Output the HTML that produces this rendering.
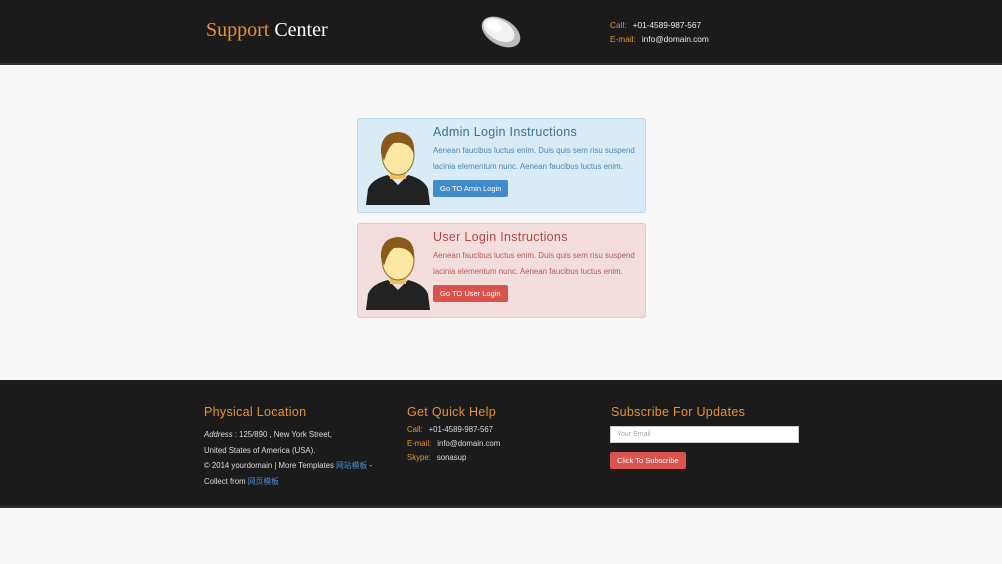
<!DOCTYPE html>
<html><head><meta charset="utf-8"><style>
*{margin:0;padding:0;box-sizing:border-box}
body{width:1002px;height:564px;overflow:hidden;background:#f7f7f7;font-family:"Liberation Sans",sans-serif;position:relative}
.hdr{position:absolute;left:0;top:0;width:1002px;height:65px;background:#1b1b1b;border-bottom:2px solid #333}
.logo{position:absolute;left:206px;top:19px;font-family:"Liberation Serif",serif;font-size:20px;color:#fff}
.logo span{color:#e8912f}
.ct{position:absolute;left:610px;top:18px;font-size:8.3px;color:#eee;line-height:14px}
.ct b{font-weight:normal;color:#e8912f;margin-right:6px}
.card{position:absolute;left:357px;width:289px;height:95px;border-radius:3px}
.c1{top:118px;background:#d8ebf6;border:1px solid #b9dbee}
.c2{top:223px;background:#f3dddd;border:1px solid #ebc4c4}
.card h3{position:absolute;left:75px;top:6px;font-size:12.5px;font-weight:normal;letter-spacing:.3px}
.c1 h3{color:#3c6f95}.c2 h3{color:#b0474a}
.card p{position:absolute;left:75px;top:24px;font-size:7.9px;line-height:16px;width:215px}
.c1 p{color:#4a86ab}.c2 p{color:#b65a5a}
.btn{position:absolute;left:75px;top:61px;height:17px;padding:0 7px;font-size:7.5px;line-height:17px;color:#fff;border-radius:2px}
.c1 .btn{background:#428bca}.c2 .btn{background:#d9534f}
.av{position:absolute;left:8px;top:8px;width:64px;height:78px}
.ftr{position:absolute;left:0;top:380px;width:1002px;height:128px;background:#1b1b1b;border-bottom:2px solid #333}
.ftr h4{position:absolute;top:25px;font-size:12.5px;font-weight:normal;color:#e8912f;letter-spacing:.3px}
.fc{position:absolute;top:47px;font-size:7.8px;color:#ddd;line-height:15.5px}
.fc b{font-weight:normal;color:#e8912f;margin-right:6px}
.fc a{color:#4a8fd0;text-decoration:none}
.inp{position:absolute;left:610px;top:426px;width:189px;height:17px;background:#fff;border:1px solid #ccc;font-size:7px;color:#aaa;padding:4px 6px}
.sub{position:absolute;left:610px;top:452px;height:17px;padding:0 7px;background:#d9534f;color:#fff;font-size:7.5px;line-height:17px;border-radius:2px}
</style></head><body>
<div class="hdr">
<div class="logo"><span>Support</span> Center</div>
<svg style="position:absolute;left:478px;top:14px" width="46" height="36" viewBox="0 0 46 36"><ellipse cx="23" cy="18" rx="21" ry="13" transform="rotate(30 23 18)" fill="#bbb"/><ellipse cx="21" cy="16" rx="17" ry="10" transform="rotate(30 21 16)" fill="#f2f2f2"/><ellipse cx="16" cy="12" rx="8" ry="5" transform="rotate(30 16 12)" fill="#fff"/></svg>
<div class="ct"><b>Call:</b>+01-4589-987-567<br><b>E-mail:</b>info@domain.com</div>
</div>

<div class="card c1">
<svg class="av" viewBox="0 0 64 78"><path d="M0 78 L2 62 Q6 52 22 48 L32 58 L42 48 Q58 52 62 62 L64 78Z" fill="#222"/><rect x="24" y="38" width="16" height="14" fill="#f0c060"/><ellipse cx="32" cy="28" rx="16" ry="20" fill="#fde7a3" stroke="#8a6a20"/><path d="M15 26 Q14 6 32 5 Q50 6 48 28 Q44 14 28 16 Q22 20 18 34Z" fill="#8a5a1c"/></svg>
<h3>Admin Login Instructions</h3>
<p>Aenean faucibus luctus enim. Duis quis sem risu suspend lacinia elementum nunc. Aenean faucibus luctus enim.</p>
<div class="btn">Go TO Amin Login</div>
</div>
<div class="card c2">
<svg class="av" viewBox="0 0 64 78"><path d="M0 78 L2 62 Q6 52 22 48 L32 58 L42 48 Q58 52 62 62 L64 78Z" fill="#222"/><rect x="24" y="38" width="16" height="14" fill="#f0c060"/><ellipse cx="32" cy="28" rx="16" ry="20" fill="#fde7a3" stroke="#8a6a20"/><path d="M15 26 Q14 6 32 5 Q50 6 48 28 Q44 14 28 16 Q22 20 18 34Z" fill="#8a5a1c"/></svg>
<h3>User Login Instructions</h3>
<p>Aenean faucibus luctus enim. Duis quis sem risu suspend lacinia elementum nunc. Aenean faucibus luctus enim.</p>
<div class="btn">Go TO User Login</div>
</div>

<div class="ftr">
<h4 style="left:204px">Physical Location</h4>
<h4 style="left:407px">Get Quick Help</h4>
<h4 style="left:611px">Subscribe For Updates</h4>
<div class="fc" style="left:204px"><i>Address</i> : 125/890 , New York Street,<br>United States of America (USA).<br>© 2014 yourdomain | More Templates <a>网站模板</a> -<br>Collect from <a>网页模板</a></div>
<div class="fc" style="left:407px;top:43px;line-height:14px"><b>Call:</b>+01-4589-987-567<br><b>E-mail:</b>info@domain.com<br><b>Skype:</b>sonasup</div>
</div>
<div class="inp">Your Email</div>
<div class="sub">Click To Subscribe</div>
</body></html>
